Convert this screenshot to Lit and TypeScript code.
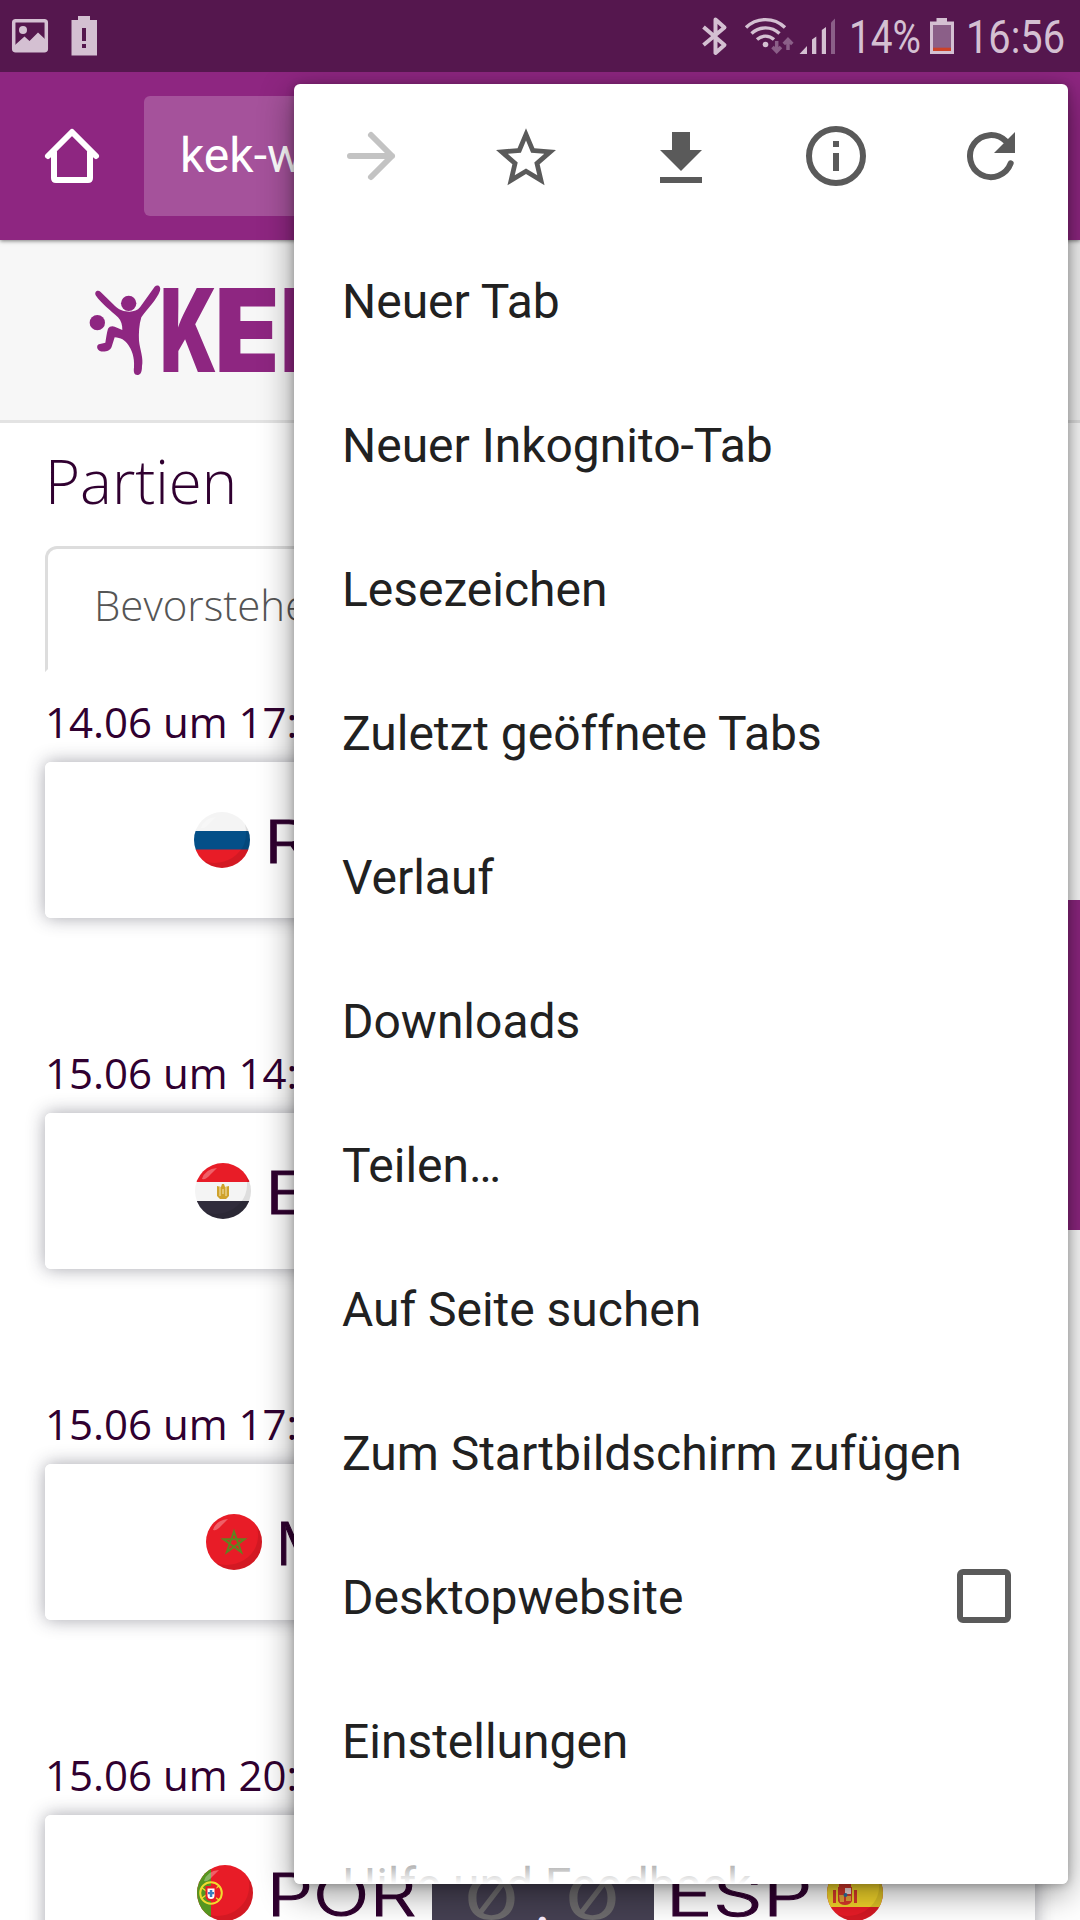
import { LitElement, html, svg, css, nothing, type TemplateResult } from "lit";
import { customElement, property } from "lit/decorators.js";

interface Team {
  flag: string;
  code: string;
  width: number;
}
interface Match {
  date: string;
  home: Team;
  away: Team;
}

const MATCHES: Match[] = [
  { date: "14.06 um 17:00", home: { flag: "ru", code: "RUS", width: 144 }, away: { flag: "sa", code: "KSA", width: 140 } },
  { date: "15.06 um 14:00", home: { flag: "eg", code: "EGY", width: 143 }, away: { flag: "uy", code: "URU", width: 140 } },
  { date: "15.06 um 17:00", home: { flag: "ma", code: "MAR", width: 132 }, away: { flag: "ir", code: "IRN", width: 132 } },
  { date: "15.06 um 20:00", home: { flag: "pt", code: "POR", width: 141 }, away: { flag: "es", code: "ESP", width: 138 } },
];

const MENU_ITEMS = [
  "Neuer Tab",
  "Neuer Inkognito-Tab",
  "Lesezeichen",
  "Zuletzt geöffnete Tabs",
  "Verlauf",
  "Downloads",
  "Teilen…",
  "Auf Seite suchen",
  "Zum Startbildschirm zufügen",
  "Desktopwebsite",
  "Einstellungen",
  "Hilfe und Feedback",
];

const ACTIONS: TemplateResult[] = [
  svg`<g fill="none" stroke="#c3c3c3" stroke-width="6" stroke-linecap="round" stroke-linejoin="round"><path d="M15 36H57M36 15L57 36L36 57"/></g>`,
  svg`<path transform="translate(0 .3) scale(3)" fill="#5a5a5a" d="M22 9.24l-7.19-.62L12 2 9.19 8.63 2 9.24l5.46 4.73L5.82 21 12 17.27 18.18 21l-1.63-7.03L22 9.24zM12 15.4l-3.76 2.27 1-4.28-3.32-2.88 4.38-.38L12 6.1l1.71 4.04 4.38.38-3.32 2.88 1 4.28L12 15.4z" style="translate: 0 2px"/>`,
  svg`<path fill="#5a5a5a" d="M27 12h18v18h12L36 51 15 30h12zM15 57h42v6H15z"/>`,
  svg`<circle cx="36" cy="36" r="27" fill="none" stroke="#5a5a5a" stroke-width="6"/><path fill="#5a5a5a" d="M33 21h6v6h-6zM33 33h6v18h-6z"/>`,
  svg`<path fill="none" stroke="#5a5a5a" stroke-width="6" stroke-linecap="round" d="M55.7 43.3A21 21 0 1 1 50.8 21.2"/><path fill="#5a5a5a" d="M60 12V33H39z"/>`,
];

const FLAGS: Record<string, TemplateResult> = {
  ru: svg`<path fill="#f4f4f4" d="M0 0h56v19H0z"/><path fill="#034f88" d="M0 19h56v19H0z"/><path fill="#e81c27" d="M0 37.500h56V56H0z"/>`,
  eg: svg`<path fill="#e81c27" d="M0 0h56v19H0z"/><path fill="#f4f4f4" d="M0 19h56v19H0z"/><path fill="#302c3b" d="M0 38h56v18H0z"/>
    <path fill="#cfa22c" d="M22 23l4 1 1-3h2l1 3 4-1v10l-3 3h-6l-3-3z"/><path stroke="#f4e6b8" stroke-width="1" d="M25 24v9M28 26v5M31 24v9" fill="none"/>`,
  ma: svg`<path fill="#e81c27" d="M0 0h56v56H0z"/><path fill="none" stroke="#5f8420" stroke-width="2" d="M28 17.500L35.200 38L17.500 25.300H38.500L20.800 38Z"/>`,
  pt: svg`<path fill="#e81c27" d="M0 0h56v56H0z"/><path fill="#559620" d="M0 0h14v56H0z"/>
    <circle cx="14" cy="28" r="10.800" fill="none" stroke="#f0dc2e" stroke-width="2"/><path fill="none" stroke="#f0dc2e" stroke-width="1.500" d="M5 23L22 35M5 33L22 21"/>
    <path fill="#e81c27" d="M8.500 21h11v9q0 6-5.500 6t-5.500-6z"/><path fill="#fff" d="M10.500 23.500h7v7q0 3.500-3.500 3.500t-3.500-3.500z"/><path fill="#3c7fc0" d="M12.800 25h2.500v7h-2.500zM11 27h6v2.200h-6z"/>`,
  es: svg`<path fill="#e81c27" d="M0 0h56v56H0z"/><path fill="#f2d52a" d="M0 14h56v28H0z"/>
    <path fill="#d8392b" d="M12 18h12v4H12zM11 22h14v14q-2 4-7 4t-7-4zM6 25h3v13H6zM27 25h3v13h-3z"/><path fill="#f4dede" d="M18 23h6v6h-6z"/><path fill="#e8a33a" d="M12 30h5v7h-4zM19 31h5v5h-5z"/><circle cx="18.500" cy="30" r="2" fill="#2c6f9d"/>`,
  sa: svg`<path fill="#559620" d="M0 0h56v56H0z"/>`,
  uy: svg`<path fill="#f4f4f4" d="M0 0h56v56H0z"/>`,
  ir: svg`<path fill="#f4f4f4" d="M0 0h56v56H0z"/>`,
};

@customElement("status-bar")
class StatusBar extends LitElement {
  static styles = css`
    :host { display: flex; justify-content: space-between; height: 72px; background: #55174e; }
    .icons { display: block; }
    .txt { font-family: Roboto, sans-serif; font-size: 45.5px; fill: #d4c0d2; }
  `;
  render() {
    return html`
      <svg class="icons" width="120" height="72" viewBox="0 0 120 72">
        <rect x="13.700" y="20.700" width="32.600" height="30" rx="2" fill="none" stroke="#d4c0d2" stroke-width="3.500"/>
        <circle cx="23" cy="30" r="4" fill="#d4c0d2"/>
        <path fill="#d4c0d2" d="M15 45L24.500 36.500L29.500 41L38 32.500L46 40V51H15z"/>
        <path fill="#d4c0d2" fill-rule="evenodd" d="M78 16h12v4h7v35.500H71.500V20H78zM82 28v13h4V28zM82 44v4h4v-4z"/>
      </svg>
      <svg class="icons" width="400" height="72" viewBox="680 0 400 72">
        <path fill="none" stroke="#d4c0d2" stroke-width="4" stroke-linejoin="round" d="M703.500 27L724.500 45L715.500 53V19.500L724.500 27.500L703.500 45"/>
        <g fill="none" stroke="#d4c0d2" stroke-width="3.400">
          <path d="M746 27.500C757 17 774 17 785 27.500"/><path d="M751.500 33.500C759.500 26 771.500 26 779.500 33.500"/><path d="M757 39.500C762 35 769 35 774 39.500"/>
        </g>
        <circle cx="765.500" cy="44.500" r="2.800" fill="#d4c0d2"/>
        <g fill="none" stroke="#8b5f88" stroke-width="3.500"><path d="M776.700 41V51M772.500 47L776.700 51.500L781 47"/><path d="M788 50V40M783.800 44L788 39.500L792.300 44"/></g>
        <path fill="#d4c0d2" d="M799.500 54L807 46V54zM812 39.500L816.300 36.500V54H812zM821.800 30L826 27V54H821.800z"/>
        <path fill="#8b5f88" d="M831 22.500L835 18.500V54H831z"/>
        <text class="txt" x="849" y="53.300" textLength="72" lengthAdjust="spacingAndGlyphs">14%</text>
        <path fill="#d4c0d2" d="M936.500 18h10.500v3.500h7V54H930V21.500h6.500z"/>
        <path fill="#8b5f88" d="M933 25h18v23h-18z"/><path fill="#cc4229" d="M933 47.700h18V51h-18z"/>
        <text class="txt" x="966" y="53.300" textLength="99" lengthAdjust="spacingAndGlyphs">16:56</text>
      </svg>
    `;
  }
}

@customElement("tool-bar")
class ToolBar extends LitElement {
  static styles = css`
    :host { display: flex; align-items: center; height: 168px; padding-right: 144px; background: #8e2681; box-shadow: 0 1px 4px rgba(0, 0, 0, 0.5); }
    .home { flex: none; width: 144px; height: 72px; }
    .address { flex: 1; height: 120px; border-radius: 6px; background: #a5529b; color: #fff;
      padding-left: 36px; font: 48px/120px Roboto, sans-serif; box-sizing: border-box; }
  `;
  render() {
    return html`
      <svg class="home" viewBox="0 0 144 72"><path fill="none" stroke="#fff" stroke-width="6" stroke-linecap="round" stroke-linejoin="round" d="M48 36L72 12L96 36M54 32V58Q54 60 56 60H88Q90 60 90 58V32"/></svg>
      <div class="address">kek-wm.de</div>
    `;
  }
}

@customElement("match-row")
class MatchRow extends LitElement {
  @property({ attribute: false }) match!: Match;
  static styles = css`
    :host { display: block; margin-bottom: 105px; }
    .date { padding-top: 9px; font: 42px/81px "Open Sans", sans-serif; color: #300030; }
    .card { display: flex; align-items: stretch; height: 156px; border-radius: 6px; background: #fff; overflow: hidden; }
    .frame { border-radius: 6px; box-shadow: 0 0 18px rgba(40, 40, 60, 0.42); }
    .team { flex: 1; display: flex; align-items: center; gap: 20px; }
    .home { flex: none; box-sizing: border-box; width: 387px; justify-content: flex-end; padding-right: 18px; }
    .away { padding-left: 18px; gap: 17px; }
    .score { flex: none; width: 222px; background: #454052; }
    .code { font: 300 59px Inter, sans-serif; fill: #300030; stroke: #300030; stroke-width: 1px; }
    .digit { font: 400 60px Inter, sans-serif; font-feature-settings: "zero" 1; fill: #6d6b6d; }
    .colon { font: 600 46px Inter, sans-serif; fill: #f8eafa; }
    .pic { display: block; flex: none; overflow: visible; }
  `;
  private flag(t: Team) {
    return html`<svg class="pic" width="56" height="56" viewBox="0 0 56 56">
      <defs><clipPath id="round"><circle cx="28" cy="28" r="28"/></clipPath></defs>
      <g clip-path="url(#round)">${FLAGS[t.flag] ?? nothing}
        <path fill="#000" opacity=".09" d="M51 12Q56 34 38 46Q24 54 10 49V56H56V12z"/>
        <path fill="#fff" opacity=".3" d="M7 16Q10 6 22 5Q18 9 15 12Q11 17 7 16z"/>
      </g></svg>`;
  }
  private code(t: Team) {
    return html`<svg class="pic" width=${t.width} height="56" viewBox="0 0 ${t.width} 56"><text class="code" x="-6.500" y="51.300" textLength=${t.width + 9} lengthAdjust="spacingAndGlyphs">${t.code}</text></svg>`;
  }
  render() {
    const { date, home, away } = this.match;
    return html`
      <div class="date">${date}</div>
      <div class="frame"><div class="card">
        <div class="team home">${this.flag(home)}${this.code(home)}</div>
        <svg class="score" viewBox="0 0 222 156">
          <text class="digit" x="31" y="104.500" textLength="57" lengthAdjust="spacingAndGlyphs">0</text>
          <text class="colon" x="103" y="126">:</text>
          <text class="digit" x="132" y="104.500" textLength="57" lengthAdjust="spacingAndGlyphs">0</text>
        </svg>
        <div class="team away">${this.code(away)}${this.flag(away)}</div>
      </div></div>
    `;
  }
}

@customElement("overflow-menu")
class OverflowMenu extends LitElement {
  static styles = css`
    :host { display: block; background: #fff; border-radius: 6px; overflow: hidden; }
    .actions { display: flex; height: 144px; align-items: center; justify-content: space-around; }
    .icon { display: block; width: 72px; height: 72px; }
    .item { display: flex; align-items: center; justify-content: space-between; height: 144px; padding: 0 57px 0 48px;
      font: 48px/56px Roboto, sans-serif; color: #212121; white-space: nowrap; }
    .label { padding-top: 4px; letter-spacing: -0.02px; }
    .box { box-sizing: border-box; width: 54px; height: 54px; border: 6px solid #5a5a5a; border-radius: 6px; }
    .fade { position: absolute; left: 0; right: 0; bottom: 0; height: 38px; background: linear-gradient(rgba(255, 255, 255, 0.3), #fff); }
  `;
  render() {
    return html`
      <div class="actions">${ACTIONS.map((a) => html`<svg class="icon" viewBox="0 0 72 72">${a}</svg>`)}</div>
      ${MENU_ITEMS.map((t) => html`<div class="item"><span class="label">${t}</span>${t === "Desktopwebsite" ? html`<span class="box"></span>` : nothing}</div>`)}
      <div class="fade"></div>
    `;
  }
}

@customElement("app-root")
class AppRoot extends LitElement {
  static styles = css`
    :host { display: block; position: relative; width: 1080px; height: 1920px; overflow: hidden; background: #fff; }
    .status { position: relative; z-index: 3; }
    .bar { position: relative; z-index: 1; }
    .site { box-sizing: border-box; height: 183px; background: #f7f7f7; border-bottom: 3px solid #e3e3e3; }
    .logo { display: block; }
    .brand { font: 900 116px Inter, sans-serif; }
    .content { padding: 0 45px; }
    .title { margin: 0 0 9px; padding-top: 2px; font: 300 60px/112px "Open Sans", sans-serif; color: #300030; }
    .tab { box-sizing: border-box; width: 495px; height: 126px; padding-left: 46px; border: 3px solid #ddd; border-bottom-color: transparent;
      border-radius: 12px 12px 0 0; font: 300 42px/111px "Open Sans", sans-serif; color: #555; }
    .side { position: absolute; right: 0; top: 900px; width: 60px; height: 330px; background: #8e2681; }
    .menu { position: absolute; z-index: 2; left: 294px; top: 84px; width: 774px; height: 1800px;
      box-shadow: 0 9px 34px rgba(0, 0, 0, 0.42), 0 1px 8px rgba(0, 0, 0, 0.24); }
  `;
  render() {
    return html`
      <status-bar class="status"></status-bar>
      <tool-bar class="bar"></tool-bar>
      <header class="site">
        <svg class="logo" width="360" height="180" viewBox="0 0 360 180" fill="#8e2681">
          <g transform="translate(0 -10) scale(.33333)">
            <circle cx="386" cy="220" r="23"/><circle cx="292" cy="278" r="23"/>
            <path d="M287 196C282 184 294 178 302 186L345 228C365 248 405 252 420 232L464 170C472 162 484 168 480 182C470 210 442 235 424 262C417 285 416 310 417 332C420 360 431 385 426 408C426 430 420 435 412 435C403 435 400 428 402 412C404 380 395 360 385 345C375 330 362 323 344 322L335 350C330 364 310 368 298 362C288 356 290 342 300 342L316 338C318 325 320 310 324 296C328 288 338 287 344 290L367 300C367 285 364 272 354 262C330 240 305 222 287 196Z"/>
          </g>
          <text class="brand" x="160" y="132" textLength="57" lengthAdjust="spacingAndGlyphs">K</text>
          <text class="brand" x="214.500" y="132" textLength="65" lengthAdjust="spacingAndGlyphs">E</text>
          <text class="brand" x="281" y="132" textLength="57" lengthAdjust="spacingAndGlyphs">K</text>
        </svg>
      </header>
      <main class="content">
        <h1 class="title">Partien</h1>
        <div class="tab">Bevorstehend</div>
        ${MATCHES.map((m) => html`<match-row .match=${m}></match-row>`)}
      </main>
      <div class="side"></div>
      <overflow-menu class="menu"></overflow-menu>
    `;
  }
}
